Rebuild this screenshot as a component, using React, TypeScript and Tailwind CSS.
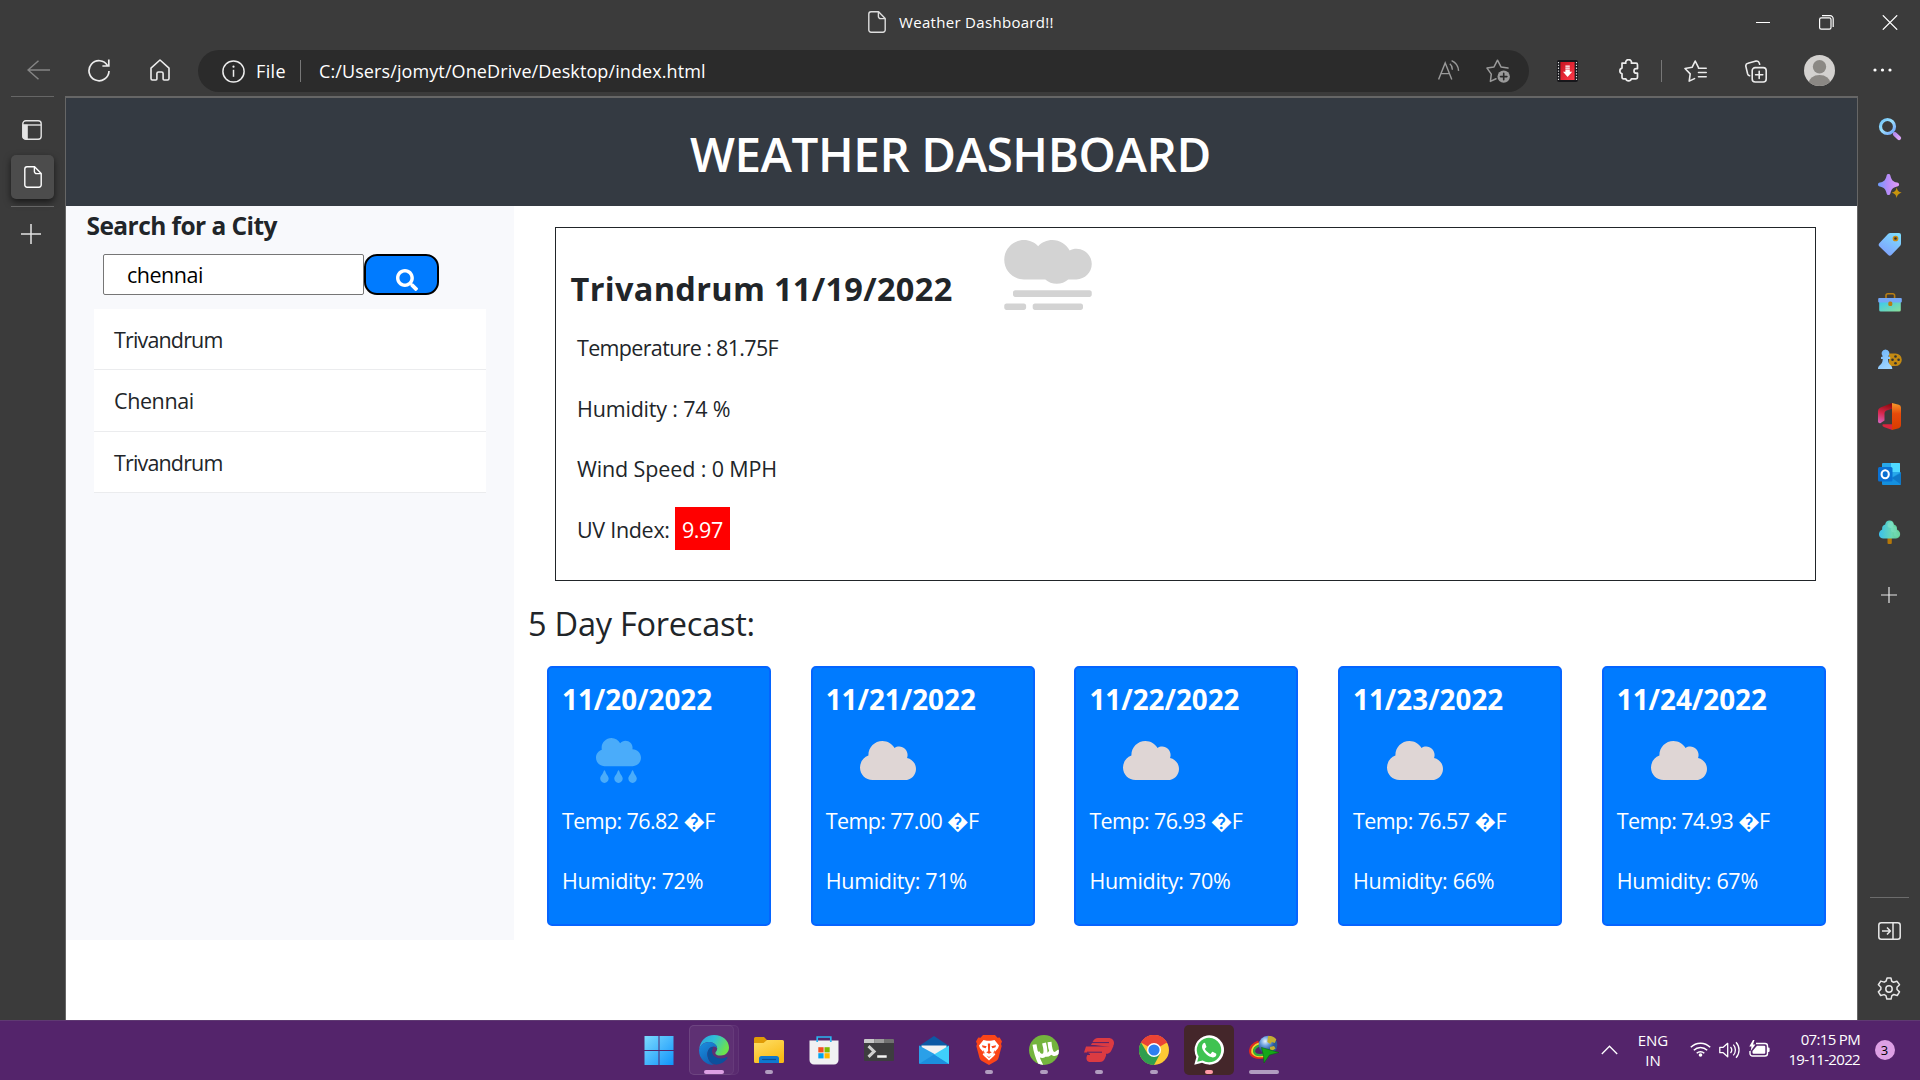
import React from "react";
import { FaSmog, FaCloudRain, FaCloud, FaSearch } from "react-icons/fa";

type P = { className?: string };

const PageIcon = ({ className }: P) => (
  <svg className={className} viewBox="0 0 18 22" fill="none" stroke="currentColor" strokeWidth="1.4" strokeLinejoin="round">
    <path d="M3 .8h7.6l6.6 6.6V19a2.2 2.2 0 0 1-2.2 2.2H3A2.2 2.2 0 0 1 .8 19V3A2.2 2.2 0 0 1 3 .8z" />
    <path d="M10.4 1v4.4a2.2 2.2 0 0 0 2.2 2.2h4.4" />
  </svg>
);

const PlusIcon = ({ className }: P) => (
  <svg className={className} viewBox="0 0 20 20" fill="none" stroke="currentColor" strokeWidth="1.5">
    <path d="M10 0v20M0 10h20" />
  </svg>
);

function TitleBar() {
  return (
    <div className="flex h-[46px] shrink-0 items-start pr-[22px] pl-[868px] text-white">
      <PageIcon className="mt-[11px] h-[22px] w-[18px] text-[#dedede]" />
      <span className="ml-[13px] text-[15px] leading-[45px] tracking-[0.31px] whitespace-nowrap">Weather Dashboard!!</span>
      <div className="mt-[14px] ml-auto flex items-center">
        <svg className="h-4 w-[14px]" viewBox="0 0 14 16"><path d="M0 8.500h14" stroke="#fff" strokeWidth="1" /></svg>
        <svg className="ml-[49px] h-[15px] w-[15px]" viewBox="0 0 15 15" fill="none" stroke="#fff" strokeWidth="1.2">
          <rect x=".6" y="2.8" width="11.4" height="11.4" rx="1.6" />
          <path d="M3 .7h8.2a3 3 0 0 1 3 3v8.3" />
        </svg>
        <svg className="ml-12 h-[15px] w-4" viewBox="0 0 16 15"><path d="M.8.3l14.4 14.4M15.2.3L.8 14.7" stroke="#fff" strokeWidth="1.2" /></svg>
      </div>
    </div>
  );
}

function Toolbar() {
  return (
    <div className="flex h-[50px] shrink-0 items-center text-[#ececec]">
      <svg className="mb-[3px] ml-[27px] h-5 w-[23px] text-[#858585]" viewBox="0 0 23 20" fill="none" stroke="currentColor" strokeWidth="1.5">
        <path d="M23 10H1M11.5.8L1 10l10.5 9.2" />
      </svg>
      <svg className="mb-[2px] ml-[38px] h-[23px] w-[22px]" viewBox="0 0 22 23" fill="none" stroke="currentColor" strokeWidth="1.7">
        <path d="M19.6 6.6A10 10 0 1 0 21 12M20.8.6v6.4h-6.4" />
      </svg>
      <svg className="mb-[2px] ml-[39.5px] h-[22px] w-5" viewBox="0 0 20 22" fill="none" stroke="currentColor" strokeWidth="1.6" strokeLinejoin="round">
        <path d="M1 9.2 10 1l9 8.2v10.4a1.4 1.4 0 0 1-1.4 1.4h-3.5a1 1 0 0 1-1-1v-5.4a1.6 1.6 0 0 0-1.6-1.6h-3a1.6 1.6 0 0 0-1.6 1.6V20a1 1 0 0 1-1 1H2.4A1.4 1.4 0 0 1 1 19.6z" />
      </svg>
      <div className="ml-[28.5px] flex h-[42px] w-[1331px] items-center rounded-full bg-[#2b2b2b] pr-[19px] pl-[24px]">
        <svg className="h-[23px] w-[23px]" viewBox="0 0 23 23" fill="none" stroke="currentColor" strokeWidth="1.5">
          <circle cx="11.5" cy="11.5" r="10.6" />
          <path d="M11.5 9.8v7" />
          <circle cx="11.5" cy="6.7" r="1.1" fill="currentColor" stroke="none" />
        </svg>
        <span className="ml-[11px] w-11 text-[18px] leading-[42px] tracking-[0.34px] text-white">File</span>
        <div className="h-[22px] w-px bg-[#777]" />
        <span className="ml-[18px] text-[18px] leading-[42px] tracking-[0.1px] whitespace-nowrap text-white">C:/Users/jomyt/OneDrive/Desktop/index.html</span>
        <svg className="mb-[2px] ml-auto h-5 w-[22px] text-[#9a9a9a]" viewBox="0 0 22 20" fill="none" stroke="currentColor" strokeWidth="1.4">
          <path d="M.6 19.5 7.2 3l6.6 16.5M2.8 13.6h8.8M11.8 3.8c1.8 1.4 2.6 3.4 2.5 5.900M13.6.7c3.8 1.700 6.700 5.200 7 10.200" />
        </svg>
        <svg className="ml-[26px] h-6 w-[24px] text-[#9a9a9a]" viewBox="0 0 24 24" fill="none" stroke="currentColor" strokeWidth="1.5" strokeLinejoin="round" strokeLinecap="round">
          <path d="M10 19.8l-5.600 2.600.9-7.300L1 9.100l7-1.200L11.5 1.200 15 7.900l7 1.200" />
          <circle cx="17.7" cy="17.6" r="6.2" fill="currentColor" stroke="none" />
          <path d="M17.7 14.4v6.400M14.500 17.600h6.400" stroke="#2b2b2b" strokeWidth="1.6" />
        </svg>
      </div>
      <svg className="ml-7 h-[22px] w-[21px]" viewBox="0 0 21 22">
        <defs><linearGradient id="ext" x2="1" y2="1"><stop stopColor="#c91420" /><stop offset="1" stopColor="#ff3b4a" /></linearGradient></defs>
        <rect width="21" height="22" rx="2" fill="#17171b" />
        <rect x="3.4" y="2" width="14.2" height="18" fill="url(#ext)" />
        <path d="M1.500 2v18M19.500 2v18" stroke="#ddd" strokeWidth="1.2" strokeDasharray="1.3 1.5" />
        <path d="M8.400 5.500h4.400v6.300h2.400l-4.600 5.200-4.600-5.200h2.400z" fill="#fff" />
        <path d="M8 7.200h5M8 9.200h5" stroke="#e0303c" strokeWidth=".7" />
      </svg>
      <svg className="mb-px ml-[39.5px] h-[23px] w-[21px]" viewBox="0 0 21 23" fill="none" stroke="currentColor" strokeWidth="1.7" strokeLinejoin="round">
        <path d="M4 4.200h3.800a2.900 2.900 0 1 1 5.600 0h4.600a1.500 1.500 0 0 1 1.500 1.500v3.900h-1.200a2.300 2.300 0 0 0 0 4.600h1.200v4.100a1.500 1.500 0 0 1-1.500 1.500h-4.600a2.900 2.900 0 0 1-5.600 0H5.500A1.500 1.500 0 0 1 4 18.300v-3.600a2.900 2.900 0 0 1 0-5.600z" />
      </svg>
      <div className="ml-[22.5px] h-[22px] w-px bg-[#777]" />
      <svg className="mb-px ml-[22px] h-[22px] w-[23px]" viewBox="0 0 23 22" fill="none" stroke="currentColor" strokeWidth="1.6" strokeLinejoin="round" strokeLinecap="round">
        <path d="M10.500 18.600l-5.300 2.500 1-7.200L1 8.500l7.100-1.200L11.200 1l3.200 6.300" />
        <path d="M14.500 8.300h7.700M14.500 12.500h7.700M14.500 16.700h7.700" />
      </svg>
      <svg className="ml-[38px] h-[23px] w-[22px]" viewBox="0 0 22 23" fill="none" stroke="currentColor" strokeWidth="1.6" strokeLinecap="round">
        <rect x="7.2" y="7.6" width="14" height="14.4" rx="3" />
        <path d="M14.200 11.200v7.200M10.600 14.800h7.200M4.600 15.800a2.800 2.800 0 0 1-2-2L.9 6.600A2.800 2.800 0 0 1 3 3.300L11 1.100a2.800 2.800 0 0 1 3.300 2l.3 1.200" />
      </svg>
      <svg className="mb-px ml-[37px] h-[31px] w-[31px]" viewBox="0 0 31 31">
        <clipPath id="av"><circle cx="15.5" cy="15.5" r="15.5" /></clipPath>
        <g clipPath="url(#av)"><path d="M0 0h31v31H0z" fill="#d3d1cf" /><circle cx="15.5" cy="11.7" r="6.7" fill="#8b8884" /><ellipse cx="15.5" cy="28.5" rx="11" ry="8.5" fill="#8b8884" /></g>
      </svg>
      <svg className="mb-[2px] ml-[38px] h-1 w-[19px]" viewBox="0 0 19 4" fill="#fff"><circle cx="2" cy="2" r="1.6" /><circle cx="9.5" cy="2" r="1.6" /><circle cx="17" cy="2" r="1.6" /></svg>
    </div>
  );
}

function LeftRail() {
  return (
    <div className="flex w-[65px] shrink-0 flex-col items-start pl-[11px] text-[#e4e4e4]">
      <div className="h-px w-[43px] bg-[#666]" />
      <svg className="mt-[23px] ml-[11px] h-5 w-5" viewBox="0 0 20 20" fill="none" stroke="currentColor" strokeWidth="1.4">
        <rect x=".8" y=".8" width="18.4" height="18.4" rx="3" />
        <path d="M1 5h18" />
        <path d="M.8 5h4.700v14.200H3A2.200 2.200 0 0 1 .8 17z" fill="currentColor" strokeWidth=".6" />
      </svg>
      <div className="mt-[15px] flex h-11 w-[43px] items-center justify-center rounded-[5px] bg-[#4c4c4c] shadow-[0_3px_7px_rgba(0,0,0,0.6)]">
        <PageIcon className="h-[22px] w-[18px] text-white" />
      </div>
      <div className="mt-[7px] h-px w-[43px] bg-[#666]" />
      <PlusIcon className="mt-[17px] ml-2.5 h-5 w-5" />
    </div>
  );
}

const SearchLogo = () => (
  <svg className="h-6 w-6" viewBox="0 0 24 24" fill="none">
    <defs>
      <linearGradient id="sg" x2="1" y2="1"><stop stopColor="#6cc3fb" /><stop offset=".45" stopColor="#9ce0fd" /><stop offset="1" stopColor="#6ea2fd" /></linearGradient>
      <linearGradient id="sh" x2="1" y2="1"><stop stopColor="#b98df2" /><stop offset="1" stopColor="#dca5f8" /></linearGradient>
    </defs>
    <path d="M14.500 14.500l3 3" stroke="#888" strokeWidth="2" />
    <circle cx="9.5" cy="9.500" r="7" stroke="url(#sg)" strokeWidth="3.2" />
    <path d="M17 17.300l4 3.700" stroke="url(#sh)" strokeWidth="4.2" strokeLinecap="round" />
  </svg>
);
const SparkleLogo = () => (
  <svg className="h-6 w-6" viewBox="0 0 24 24">
    <defs><linearGradient id="sp" x2="1"><stop stopColor="#6c9cfb" /><stop offset=".45" stopColor="#b48cf8" /><stop offset="1" stopColor="#e39af6" /></linearGradient></defs>
    <path d="M10.500 0c1.200 0 1.600.6 2 2 1.100 4 2.100 5.500 6.600 6.600 1.400.3 2 .9 2 1.900s-.6 1.600-2 2c-4.500 1-5.500 2.500-6.600 6.500-.4 1.400-.8 2-2 2s-1.600-.6-2-2c-1.100-4-2.100-5.500-6.600-6.500-1.400-.4-1.900-1-1.900-2s.5-1.600 1.900-1.900C6.400 7.500 7.400 6 8.500 2c.4-1.400.8-2 2-2z" fill="url(#sp)" />
    <path d="M18.700 13.500c1 3.500 1.600 4.200 5 5.200-3.400 1-4 1.700-5 5.200-1-3.500-1.600-4.200-5-5.200 3.400-1 4-1.700 5-5.200z" fill="#c8940d" />
  </svg>
);
const TagLogo = () => (
  <svg className="h-6 w-6" viewBox="0 0 24 24">
    <defs><linearGradient id="tg" x1=".8" x2=".2" y2="1"><stop stopColor="#7ddcfd" /><stop offset="1" stopColor="#7f9dfc" /></linearGradient></defs>
    <path d="M12.500 1H21a2 2 0 0 1 2 2v8.500a4 4 0 0 1-1 2.600l-8.400 8.700a2.500 2.500 0 0 1-3.600 0L1.500 14.500a2.500 2.500 0 0 1 0-3.500L10 2a3.500 3.500 0 0 1 2.500-1z" fill="url(#tg)" />
    <circle cx="17.5" cy="6.5" r="2.1" fill="#333" stroke="#c98a10" strokeWidth="1.5" />
  </svg>
);
const ToolboxLogo = () => (
  <svg className="h-6 w-6" viewBox="0 0 24 24">
    <defs><linearGradient id="tb" x2="1" y2="1"><stop stopColor="#35c8f4" /><stop offset="1" stopColor="#8be097" /></linearGradient></defs>
    <path d="M8 9V5.500A1.800 1.800 0 0 1 9.800 3.700h5a1.800 1.800 0 0 1 1.800 1.800V9" fill="none" stroke="#b87d12" strokeWidth="1.6" />
    <path d="M1.200 11h21.600v9a1.500 1.500 0 0 1-1.500 1.500H2.700A1.500 1.500 0 0 1 1.200 20z" fill="url(#tb)" />
    <rect x=".2" y="8" width="23.6" height="4.5" rx="1" fill="#74a7f8" />
    <rect x="10.3" y="11.5" width="4" height="4.5" rx="1.5" fill="#b87d12" />
  </svg>
);
const GamesLogo = () => (
  <svg className="h-6 w-6" viewBox="0 0 24 24">
    <defs><linearGradient id="gm" x2=".5" y2="1"><stop stopColor="#6ab2fb" /><stop offset="1" stopColor="#9ed4fe" /></linearGradient></defs>
    <path d="M11 6.500h6.500a6.300 6.300 0 0 1 0 12.600H11z" fill="#c48a12" />
    <circle cx="17.5" cy="9.500" r="1.3" fill="#333" /><circle cx="17.5" cy="16.2" r="1.3" fill="#333" /><circle cx="14.5" cy="12.8" r="1.3" fill="#333" /><circle cx="20.6" cy="12.8" r="1.3" fill="#333" />
    <path d="M7.500 2.500a4 4 0 0 1 2.700 6.900l2 .6v2H10c.1 3.200 1 5 2.800 6.500 1.200 1 1.500 2 1.500 3.500H0c0-1.500.4-2.500 1.500-3.500C3.500 17 4.600 15.200 4.800 12H3v-2l1.800-.6A4 4 0 0 1 7.500 2.500z" fill="url(#gm)" />
  </svg>
);
const OfficeLogo = () => (
  <svg className="h-[27px] w-[23px]" viewBox="0 0 23 27">
    <defs>
      <linearGradient id="o1" x1=".5" x2=".3" y2="1"><stop stopColor="#8d0b0f" /><stop offset=".5" stopColor="#d8264a" /><stop offset="1" stopColor="#d561b8" /></linearGradient>
      <linearGradient id="o2" y2="1" x2="0"><stop stopColor="#f79b2b" /><stop offset=".4" stopColor="#e64a0a" /><stop offset="1" stopColor="#d83b01" /></linearGradient>
    </defs>
    <path d="M14 0v5.700L8.500 7.600a3 3 0 0 0-2 2.400v7.500L2.700 20C1.400 20.700 0 19.800 0 18.300V8.500C0 6.800.9 5.300 2.500 4.600z" fill="url(#o1)" />
    <path d="M5 21.300h9.300V27L5.800 23.900C4.300 23.300 3.900 22 5 21.300z" fill="#d7263f" />
    <path d="M14 0l6.800 1.800A3 3 0 0 1 23 4.700v17.600a3 3 0 0 1-2.200 2.900L14 27z" fill="url(#o2)" />
  </svg>
);
const OutlookLogo = () => (
  <svg className="h-[22px] w-[23px]" viewBox="0 0 23 22">
    <rect x="4" width="18" height="17" rx="1" fill="#28a8ea" />
    <path d="M13 0h8a1 1 0 0 1 1 1v8h-9z" fill="#50d9ff" />
    <path d="M4 10l9 5 10-6v12a1 1 0 0 1-1 1H5a1 1 0 0 1-1-1z" fill="#1490df" />
    <path d="M14 15l9 6.500V10z" fill="#0f78c8" />
    <rect y="4" width="14.5" height="14.5" rx="1.5" fill="#0a70d2" />
    <ellipse cx="7.2" cy="11.2" rx="3.6" ry="4" fill="none" stroke="#fff" strokeWidth="2.1" />
  </svg>
);
const TreeLogo = () => (
  <svg className="h-6 w-6" viewBox="0 0 24 24">
    <defs><linearGradient id="tr" x2="1"><stop stopColor="#39c0ee" /><stop offset=".6" stopColor="#6ad8b4" /><stop offset="1" stopColor="#5cc888" /></linearGradient></defs>
    <rect x="9.5" y="17" width="4.3" height="7" rx="1" fill="#b57708" />
    <path d="M11.600.5a4.600 4.600 0 0 1 4.300 4 4.500 4.500 0 0 1 3 5c2.600 1.200 3.600 3.400 3.200 5.500-.4 2.300-2.200 3.500-4.400 3.500H5.300C3.200 18.500 1.300 17.200 1 15c-.3-2.200.8-4.300 3.200-5.500a4.500 4.500 0 0 1 3-5A4.600 4.600 0 0 1 11.600.5z" fill="url(#tr)" />
    <circle cx="12.5" cy="5" r="3" fill="#8be8cf" opacity=".5" /><circle cx="16" cy="9.500" r="3" fill="#8be8cf" opacity=".35" /><circle cx="19" cy="14" r="3" fill="#8be8cf" opacity=".3" />
  </svg>
);

function RightRail() {
  const items = [SearchLogo, SparkleLogo, TagLogo, ToolboxLogo, GamesLogo, OfficeLogo, OutlookLogo, TreeLogo];
  return (
    <div className="flex w-[62px] shrink-0 flex-col items-center pt-[4px] pl-px text-[#e8e8e8]">
      {items.map((Logo, i) => (
        <div key={i} className="flex h-[57.6px] shrink-0 items-center justify-center"><Logo /></div>
      ))}
      <PlusIcon className="mt-[26px] mr-[2px] h-4 w-4" />
      <div className="mt-auto mr-px h-px w-[39px] bg-[#6c6c6c]" />
      <svg className="mt-6 mr-px h-[18px] w-[23px]" viewBox="0 0 23 18" fill="none" stroke="currentColor" strokeWidth="1.5" strokeLinejoin="round">
        <rect x=".8" y=".8" width="21.4" height="16.4" rx="2.5" />
        <path d="M15 1v16M4 9h8M9 5.500L12.400 9 9 12.500" />
      </svg>
      <svg className="mt-[37px] mr-px mb-[19px] h-[24px] w-[24px]" viewBox="1.5 1.5 21 21" fill="none" stroke="currentColor" strokeWidth="1.3" strokeLinejoin="round">
        <circle cx="12" cy="12" r="2.800" />
        <path d="M10.300 2.300h3.400l.7 2.900 1.600.9 2.900-.9 2.300 3-2.200 2.200v2l2.200 2.100-2 3.200-3-.9-1.700 1-.7 3h-3.700l-.8-3-1.600-.9-3 .8-2-3.200 2.200-2.200v-1.900l-2.200-2.100 2.100-3.200 3 .9 1.700-1z" />
      </svg>
    </div>
  );
}

function Sidebar() {
  return (
    <aside className="h-[734px] w-[448px] shrink-0 bg-[#f8f9fc]">
      <h5 className="pt-[1.5px] pl-[20.5px] text-[24.5px] leading-9 font-bold tracking-[-0.56px]">Search for a City</h5>
      <div className="mt-[10.5px] ml-[37px] flex h-[41px]">
        <div className="w-[261px] rounded-[2px] border border-[#767676] bg-white pl-[23px] text-[21.5px] leading-[39px] tracking-[-0.48px] text-black">chennai</div>
        <button className="flex w-[75px] rounded-[13px] border-2 border-black bg-[#007bff] pt-[13px] pl-[30px] text-white">
          <FaSearch className="h-[22px] w-[22px]" />
        </button>
      </div>
      <ul className="mt-[14px] ml-7 w-[392px]">
        {["Trivandrum", "Chennai", "Trivandrum"].map((c, i) => (
          <li key={i} className="h-[61.4px] border-b border-[#ebecee] bg-white pl-5 text-[21.5px] leading-[61px]">
            <span className={c === "Chennai" ? "tracking-[-0.4px]" : "tracking-[-0.85px]"}>{c}</span>
          </li>
        ))}
      </ul>
    </aside>
  );
}

function Current() {
  return (
    <section className="mt-[21px] ml-[41px] h-[354px] w-[1261px] border border-[#212529]">
      <div className="flex h-[90px] pl-[14.5px]">
        <h3 className="w-[433px] pt-[36px] text-[32.5px] leading-[50px] font-bold tracking-[0.31px]">Trivandrum 11/19/2022</h3>
        <FaSmog className="mt-3 h-[70px] w-[88px] text-[#d3d3d3]" />
      </div>
      <div className="pl-[21px] text-[21.5px] leading-[60.7px]">
        <p className="tracking-[-0.66px]">Temperature : 81.75F</p>
        <p className="tracking-[-0.18px]">Humidity : 74 %</p>
        <p className="tracking-[-0.12px]">Wind Speed : 0 MPH</p>
        <p className="flex">
          <span className="w-[98px] tracking-[-0.3px]">UV Index:</span>
          <span className="mt-[7px] h-[43px] w-[55px] bg-[#f00] pl-[7px] leading-[46px] tracking-[-0.45px] text-white">9.97</span>
        </p>
      </div>
    </section>
  );
}

const days = [
  { date: "11/20/2022", rain: true, temp: "76.82", hum: 72 },
  { date: "11/21/2022", rain: false, temp: "77.00", hum: 71 },
  { date: "11/22/2022", rain: false, temp: "76.93", hum: 70 },
  { date: "11/23/2022", rain: false, temp: "76.57", hum: 66 },
  { date: "11/24/2022", rain: false, temp: "74.93", hum: 67 },
];

function Forecast() {
  return (
    <section>
      <h3 className="mt-[12.5px] pl-[14px] text-[32.5px] leading-[60px] font-medium tracking-[-0.24px]">5 Day Forecast:</h3>
      <div className="mt-[12.5px] ml-[33px] flex gap-[39.7px]">
        {days.map((d) => (
          <article key={d.date} className="h-[260px] w-[224px] shrink-0 rounded-[5px] border-2 border-[#0565ff] bg-[#007bff] pt-[11px] pl-[13px] text-white">
            <h5 className="text-[27.8px] leading-10 font-bold">{d.date}</h5>
            <div className="mt-[19px] pl-[34px]">
              {d.rain ? <FaCloudRain className="h-[45px] w-[45px] text-[#4aacfa]" /> : <FaCloud className="h-[45px] w-[56px] text-[#dfd6d5]" />}
            </div>
            <p className="mt-2 text-[21.5px] leading-[60.3px] tracking-[-0.6px] whitespace-pre">Temp: {d.temp} �F</p>
            <p className="text-[21.5px] leading-[60.3px] tracking-[-0.3px]">Humidity: {d.hum}%</p>
          </article>
        ))}
      </div>
    </section>
  );
}

const StartLogo = () => (
  <svg className="h-[30px] w-[30px]" viewBox="0 0 30 30">
    <defs><linearGradient id="st" gradientUnits="userSpaceOnUse" x1="0" y1="0" x2="30" y2="30"><stop stopColor="#7fdcfe" /><stop offset="1" stopColor="#0f93fb" /></linearGradient></defs>
    <path d="M.5 1h14v14H.5zM15.500 1h14v14h-14zM.5 16h14v14H.5zM15.500 16h14v14h-14z" fill="url(#st)" />
  </svg>
);
const EdgeLogo = () => (
  <svg className="h-[30px] w-[30px]" viewBox="0 0 30 30">
    <defs>
      <linearGradient id="e1" x2="1" y2=".4"><stop stopColor="#2a9fe0" /><stop offset=".5" stopColor="#30bfd8" /><stop offset="1" stopColor="#6be34e" /></linearGradient>
      <linearGradient id="e2" x2=".6" y2="1"><stop stopColor="#1b8fe0" /><stop offset="1" stopColor="#1061b4" /></linearGradient>
    </defs>
    <path d="M.3 14C.9 6 7 0 15 0c9 0 15 6 15 12.600 0 4.600-3.400 8-8 8-4 0-5.600-1.500-5.600-2.700 0-1 1.800-1.700 1.800-4.300C18.200 10 14.500 7 10 7 5.500 7 2 9.500.3 14z" fill="url(#e1)" />
    <path d="M.1 14.500C1.300 9.800 5.500 7 10 7c4.700 0 8.200 3 8.200 6.600-.6-1.300-2-2-3.400-2-4 0-6.800 4-6.300 9 .4 4.200 3 7.700 6.500 9.400C6 30-.6 22.500.1 14.500z" fill="url(#e2)" />
    <path d="M13.200 12c-3.400.8-5.200 4.500-4.700 8.600.5 5 4.300 9.400 9.500 9 4.500-.5 8.200-3 10.300-6.600.4-.8-.2-1.200-.9-.8-6 3-14.400.5-14.400-6.200 0-1.500.6-2.800 1.500-3.800z" fill="#0c509c" />
  </svg>
);
const ExplorerLogo = () => (
  <svg className="h-[30px] w-[30px]" viewBox="0 0 30 30">
    <defs><linearGradient id="ex" x2=".6" y2="1"><stop stopColor="#ffdf68" /><stop offset="1" stopColor="#f9bb16" /></linearGradient></defs>
    <path d="M0 3.500A1.500 1.500 0 0 1 1.500 2H10l3 3-1 4H0z" fill="#e09b06" />
    <path d="M0 8h9.500L13 5h15.500A1.500 1.500 0 0 1 30 6.500v20a1.500 1.500 0 0 1-1.500 1.500h-27A1.500 1.500 0 0 1 0 26.500z" fill="url(#ex)" />
    <path d="M5 28v-4.500A2.500 2.500 0 0 1 7.500 21h15a2.500 2.500 0 0 1 2.500 2.500V28z" fill="#0e78cf" />
    <path d="M8 24.500h14" stroke="#0a4f94" strokeWidth="1.2" />
  </svg>
);
const StoreLogo = () => (
  <svg className="h-[30px] w-[30px]" viewBox="0 0 30 30">
    <path d="M.5 5.500h29V25a4.500 4.500 0 0 1-4.500 4.500H5A4.500 4.500 0 0 1 .5 25z" fill="#f1f1f3" />
    <path d="M8.200 7V2h13.600v5" fill="none" stroke="#2bb4ef" strokeWidth="1.7" />
    <path d="M9.300 12.200h5.300v5.200H9.300z" fill="#f25022" /><path d="M15.500 12.200h5.200v5.200h-5.200z" fill="#7fba00" /><path d="M9.300 18.200h5.300v5.200H9.300z" fill="#00a4ef" /><path d="M15.500 18.200h5.200v5.200h-5.200z" fill="#ffb900" />
  </svg>
);
const TerminalLogo = () => (
  <svg className="h-[30px] w-[30px]" viewBox="0 0 30 30">
    <rect y="4" width="30" height="22" rx="1" fill="#3d3d3f" />
    <path d="M1 4h9.500v4H0V5a1 1 0 0 1 1-1z" fill="#c9c9c9" /><path d="M10.500 4H20v4h-9.500z" fill="#9c9c9c" /><path d="M20 4h9a1 1 0 0 1 1 1v3H20z" fill="#707070" />
    <path d="M4.500 11.200l5.600 5.200-5.600 5.400" fill="none" stroke="#d0d0d0" strokeWidth="3" /><path d="M13.200 21.500h9.500" stroke="#f3f3f3" strokeWidth="2.5" />
  </svg>
);
const MailLogo = () => (
  <svg className="h-[30px] w-[30px]" viewBox="0 0 30 30">
    <path d="M0 11L15 1l15 10-3 6H3z" fill="#0c59a4" />
    <path d="M2.500 10.500h25V19L15 25 2.500 19z" fill="#f2f2f2" />
    <path d="M0 10.500L15.500 19 30 29H1.200A1.200 1.200 0 0 1 0 27.800z" fill="#2aa0e8" />
    <path d="M30 10.500L15 19.500 28.500 29H30z" fill="#3fd0fb" /><path d="M0 29l15-9.500L30 29z" fill="#1c8fdf" />
  </svg>
);
const BraveLogo = () => (
  <svg className="h-[30px] w-[26px]" viewBox="0 0 26 30">
    <path d="M7 0h12l2.500 2.700 2.200-.3L26 6.500l-1 2.500.7 2L22.500 23a5 5 0 0 1-2 2.800L13 30l-7.500-4.200a5 5 0 0 1-2-2.800L.3 11 1 9 0 6.500l2.300-4.100 2.200.3z" fill="#fb4518" />
    <path d="M7.500 5l3.500.7h4l3.500-.7 4.500 5.500-1 2.800-3.500 4 .8 2.200-1.600 1.700-4.700 4.300-4.700-4.300-1.600-1.700.8-2.200-3.500-4L3 10.500z" fill="#fff" />
    <path d="M6 10.300l4.700.9-1.200 2-3-.9zM20 10.300l-4.700.9 1.200 2 3-.9zM11.800 8.500h2.400l-.4 7.800 2 1-2.800 1.500-2.800-1.500 2-1zM7 15l1.500 2.300-.4 2-.8-1.300zM19 15l-1.500 2.300.4 2 .8-1.300zM10.500 20.500L13 22l2.500-1.500L13 23z" fill="#fb4518" />
  </svg>
);
const TorrentLogo = () => (
  <svg className="h-[30px] w-[30px]" viewBox="0 0 30 30">
    <clipPath id="ut"><circle cx="15" cy="15" r="15" /></clipPath>
    <circle cx="15" cy="15" r="15" fill="#74b43e" />
    <g clipPath="url(#ut)" fill="none" stroke="#fff" strokeWidth="4"><path d="M5.500 9.500c1 7.500 3 14 7 21.500M8.500 17c1.500 4.500 6 5 7.500 2 1-2.500.3-6.500-1-11M20.500 7c.5 6.500 2 11.500 4.500 12 1.800.3 3-.5 5.500-3M16 19.500c2.500.5 5-.5 6-3" /></g>
  </svg>
);
const ExpressLogo = () => (
  <svg className="h-[30px] w-[30px]" viewBox="0 0 30 30" fill="#dc3b42">
    <path d="M7 10l1.800-3.500C10 4.200 11.500 3 14 3h10.500c4.500 0 6.500 3.500 5 7.500z" />
    <path d="M2 11.600h27.200l-1.700 3.600c-1.300 2.700-3 3.600-5.500 3.600H5L4.300 17.500H0z" />
    <path d="M3.300 19.900h19l-1 2.600C20.200 25.600 18.500 27 15.500 27H6.500c-3.500 0-5.200-3-3.200-7.100z" />
    <path d="M7.500 9.500h21.700v2.500H26zM6 18h16v3H6z" />
    <path d="M7 7.600h18M3 17.200h15" stroke="#54246b" strokeWidth="1" />
  </svg>
);
const ChromeLogo = () => (
  <svg className="h-[30px] w-[30px]" viewBox="0 0 30 30">
    <circle cx="15" cy="15" r="15" fill="#fcc934" />
    <path d="M15 15L2 7.500A15 15 0 0 1 28 7.500z" fill="#ea4335" />
    <path d="M15 8h13a15 15 0 0 0-26-.5z" fill="#ea4335" />
    <path d="M2 7.500A15 15 0 0 0 15 30l6.300-11.500-12.400.5z" fill="#2f9e4f" />
    <circle cx="15" cy="15" r="7" fill="#fff" /><circle cx="15" cy="15" r="5.6" fill="#2f7ff0" />
  </svg>
);
const WhatsLogo = () => (
  <svg className="h-[30px] w-[30px]" viewBox="0 0 30 30">
    <path d="M.3 29.700L2.400 22A14.700 14.700 0 1 1 8 27.700z" fill="#fff" />
    <path d="M3.200 26.800l1.500-5.200a12.200 12.200 0 1 1 4 3.900z" fill="#3fc351" />
    <path d="M10.500 7.800c-.6 0-2.500 1.300-2.500 4 0 3.400 4 8 7.500 9.800 3.300 1.600 6.500.6 6.800-1.600.2-1.500 0-1.600-3.300-3.100-1.200-.4-1.700 2-2.500 2-1 0-5.200-3.500-5.500-5 0-.7 1.700-1.500 1.400-2.400-1-2.800-1.200-3.700-1.900-3.700z" fill="#fff" />
  </svg>
);
const IdmLogo = () => (
  <svg className="h-[30px] w-[30px]" viewBox="0 0 30 30">
    <defs><radialGradient id="gl" cx=".35" cy=".3"><stop stopColor="#e6f4ff" /><stop offset=".5" stopColor="#6b9fe0" /><stop offset="1" stopColor="#2c5796" /></radialGradient></defs>
    <g fill="none" strokeWidth="2.2"><path d="M9.500 6.500C4 8.500.4 12.500 1.200 17c.8 4.500 6 7 14 5.500" stroke="#e0281d" /><path d="M10 8.500c-4.500 1.500-7.300 4.800-6.800 8.300.5 3 5 5.200 12 4.200" stroke="#f6d02a" /><path d="M10.500 10.500c-3.800 1.400-5.800 3.600-5.400 6.200.5 2.500 4 4 10 3" stroke="#2fae3c" /></g>
    <circle cx="19" cy="10" r="9.300" fill="url(#gl)" />
    <path d="M19 1.200c3-.8 6.500.5 8.300 3.200l-1.500 3.600-3-1-1.500 2-3-2zM21 12l4-1 1.500 2.500-3 2-2.500-1z" fill="#c3ad32" />
    <path d="M12.500 12.500L30 17.500l-9.500 2.500-5.500 8-.5-7z" fill="#13a818" stroke="#0b6410" strokeWidth=".6" />
  </svg>
);

function Taskbar() {
  const apps: { Logo: React.FC; box?: string; bar?: string; edge?: boolean }[] = [
    { Logo: StartLogo },
    { Logo: EdgeLogo, box: "border border-white/5 bg-white/3", bar: "w-5 bg-[#dda0e4]", edge: true },
    { Logo: ExplorerLogo, bar: "w-2 bg-[#b19dc0]" },
    { Logo: StoreLogo },
    { Logo: TerminalLogo },
    { Logo: MailLogo },
    { Logo: BraveLogo, bar: "w-2 bg-[#b19dc0]" },
    { Logo: TorrentLogo, bar: "w-2 bg-[#b19dc0]" },
    { Logo: ExpressLogo, bar: "w-2 bg-[#b19dc0]" },
    { Logo: ChromeLogo, bar: "w-2 bg-[#b19dc0]" },
    { Logo: WhatsLogo, box: "bg-[#44262a]", bar: "w-2 bg-[#ff9aa5]" },
    { Logo: IdmLogo, bar: "w-[30px] bg-[#b19dc0]" },
  ];
  return (
    <div className="flex h-[60px] shrink-0 border-t border-[#5f3a72] bg-[#54246b] text-white">
      <div className="ml-[631px] flex">
        {apps.map(({ Logo, box = "", bar = "", edge }, i) => (
          <div key={i} className="flex w-[55px] justify-center pt-1">
            <div className={"relative flex h-[50px] w-[50px] flex-col items-center rounded-[5px] " + box}>
              {edge && <div className="absolute -top-px -left-px h-[50px] w-[45px] rounded-[5px] border border-white/5 bg-white/3" />}
              <div className={edge ? "relative mt-[9px] flex h-[30px]" : "mt-2.5 flex h-[30px]"}><Logo /></div>
              <div className={"relative mt-[5px] h-1 rounded-full " + bar} />
            </div>
          </div>
        ))}
      </div>
      <svg className="mt-[24px] ml-[310px] h-2.5 w-[17px]" viewBox="0 0 17 10" fill="none" stroke="#fff" strokeWidth="1.3"><path d="M.8 9L8.500 1.200 16.200 9" /></svg>
      <div className="mt-[9px] ml-[18px] w-[34px] text-center text-[15px] leading-5">
        <p>ENG</p>
        <p>IN</p>
      </div>
      <svg className="mt-[20px] ml-[19.5px] h-4 w-[21px]" viewBox="0 0 21 16" fill="none" stroke="#fff" strokeWidth="1.5">
        <path d="M.8 6.200a13.700 13.700 0 0 1 19.400 0M3.800 9.300a9.500 9.500 0 0 1 13.400 0M6.700 12.200a5.400 5.400 0 0 1 7.600 0" />
        <circle cx="10.5" cy="14" r="1.8" fill="#fff" stroke="none" />
      </svg>
      <svg className="mt-[20px] ml-[8.5px] h-[18px] w-[21px]" viewBox="0 0 21 18" fill="none" stroke="#fff" strokeWidth="1.3" strokeLinejoin="round">
        <path d="M.8 6.300v5.400h3.400l4.500 4V2.300l-4.500 4zM11.500 6a4.600 4.600 0 0 1 0 6M14.300 3.600a8 8 0 0 1 0 10.800M17 1.200a11.500 11.500 0 0 1 0 15.600" />
      </svg>
      <svg className="mt-[19px] ml-[9px] h-[17px] w-[21px]" viewBox="0 0 21 17">
        <path d="M7 3.500h9a2.500 2.500 0 0 1 2.500 2.500v7.500a2.500 2.500 0 0 1-2.500 2.500H3.500A2.500 2.500 0 0 1 1 13.500V11" fill="none" stroke="#fff" strokeWidth="1.4" />
        <path d="M8 5.800h7.300a1 1 0 0 1 1 1v6a1 1 0 0 1-1 1H4.500a1 1 0 0 1-1-1V11zM19 7.500h.6a1 1 0 0 1 1 1v2.500a1 1 0 0 1-1 1H19zM4 0L.3 6.500h2.200L1.700 11 6.500 4.500H4L5.500 0z" fill="#fff" />
      </svg>
      <div className="mt-2 w-[90px] text-right text-[15px] leading-5 tracking-[-0.67px] whitespace-nowrap">
        <p>07:15 PM</p>
        <p>19-11-2022</p>
      </div>
      <div className="mt-[19px] ml-[14.5px] h-5 w-5 rounded-full bg-[#dda0e4] text-center text-[13px] leading-5 text-black">3</div>
    </div>
  );
}

export default function App() {
  return (
    <div className="flex h-[1080px] w-[1920px] flex-col overflow-hidden bg-[#3b3b3b] font-['Open_Sans','Noto_Sans',sans-serif]">
      <TitleBar />
      <Toolbar />
      <div className="flex min-h-0 flex-1">
        <LeftRail />
        <div className="flex flex-1 flex-col border-x border-t-2 border-[#666] bg-white text-[#212529]">
          <header className="h-[108px] shrink-0 bg-[#343a42] pt-[3px] pl-[624px] text-[47.5px] leading-[106px] font-semibold tracking-[-0.41px] whitespace-nowrap text-white">
            WEATHER DASHBOARD
          </header>
          <div className="flex">
            <Sidebar />
            <main className="min-w-0 flex-1">
              <Current />
              <Forecast />
            </main>
          </div>
        </div>
        <RightRail />
      </div>
      <Taskbar />
    </div>
  );
}
